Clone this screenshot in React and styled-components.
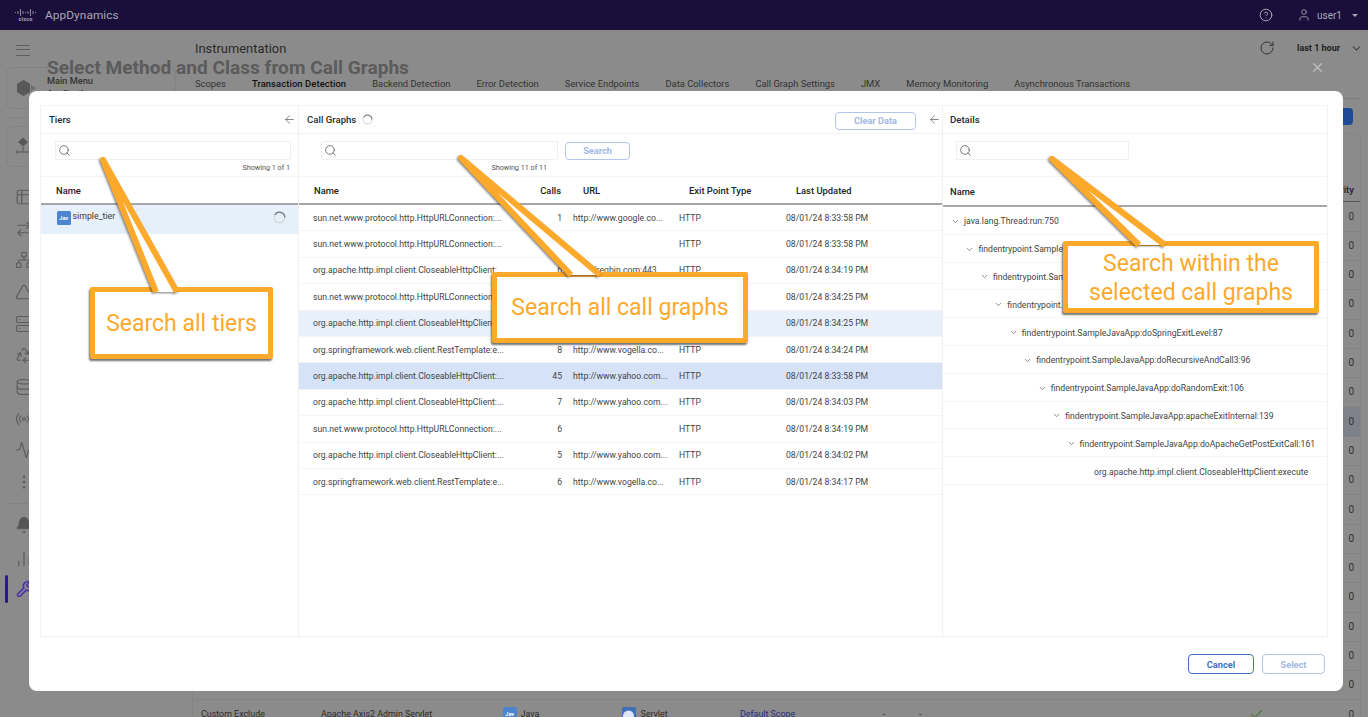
import React from "react";
import styled, { createGlobalStyle } from "styled-components";
import {
  ArrowLeft, Search as SearchIcon, ChevronDown, X, RotateCw, CircleHelp, User,
  Table2, ArrowRightLeft, Network, Triangle, Server, Recycle, Database, Radio, Activity,
  EllipsisVertical, Bell, ChartNoAxesColumn, Wrench, Check,
} from "lucide-react";

const Global = createGlobalStyle`
  html, body { margin: 0; padding: 0; height: 100%; overflow: hidden; background: #8a8a8a; }
  body { font-family: Roboto, "Liberation Sans", sans-serif; }
  * { box-sizing: border-box; }
`;

const Page = styled.div`
  position: relative; width: 1368px; height: 717px; overflow: hidden;
  display: flex; flex-direction: column; background: #8b8b8b;
`;
const TopBar = styled.header`
  height: 30px; flex: none; background: #1a0f3b; color: #a9a6b6;
  display: flex; align-items: center; padding: 0 10px 0 15px;
`;
const CiscoMark = styled.div`
  width: 21px; display: flex; flex-direction: column; align-items: center; margin-right: 9px; color: #a9a6b6;
`;
const CiscoWord = styled.span`font-size: 5.5px; font-weight: 700; line-height: 6px; letter-spacing: .2px;`;
const Brand = styled.span`font-size: 11.8px; letter-spacing: .1px;`;
const Spacer = styled.div`flex: 1;`;
const UserName = styled.span`font-size: 10px; margin: 0 10px 0 6px;`;
const HelpBox = styled.div`display: flex; margin-right: 24px; color: #c5c3cd;`;
const Caret = styled.span`
  width: 0; height: 0; border-left: 3px solid transparent; border-right: 3px solid transparent;
  border-top: 3px solid #a9a6b6;
`;

const Body = styled.div`flex: 1; display: flex; min-height: 0;`;
const Sidebar = styled.aside`
  width: 187px; flex: none; padding: 15px 0 0 6px; display: flex; flex-direction: column; color: #555;
`;
const Burger = styled.div`
  width: 14px; height: 11px; margin: 0 0 11px 10px;
  border-top: 1.5px solid #5f5f5f; border-bottom: 1.5px solid #5f5f5f; position: relative;
  &::after { content: ""; position: absolute; left: 0; right: 0; top: 3.2px; border-top: 1.5px solid #5f5f5f; }
`;
const NavCard = styled.div`
  width: 170px; height: ${p => p.$h}px; flex: none; border: 1px solid #828282; border-radius: 6px;
  display: flex; align-items: center; gap: 10px; padding-left: 9px; margin-bottom: ${p => p.$gap}px;
`;
const NavLabel = styled.div`display: flex; flex-direction: column; font-size: 9.2px; font-weight: 500; color: #333; line-height: 13px; padding-bottom: 2px;`;
const NavStrong = styled.span`font-weight: 700; color: #222;`;
const Divider = styled.div`width: 170px; flex: none; border-top: 1px solid #828282; margin-bottom: 8px; margin-top: ${p => p.$mt || 0}px;`;
const IconList = styled.div`display: grid; grid-auto-rows: 31.7px; justify-items: start; padding-left: 9px; margin-top: 14px;`;
const IconCell = styled.div`height: 100%; display: flex; align-items: center; color: #5c5c5c;`;
const LowerList = styled.div`display: flex; flex-direction: column; padding-left: 9px; margin-top: 4px;`;
const LowerCell = styled.div`height: 18px; display: flex; align-items: center; color: #5c5c5c; margin-bottom: ${p => p.$gap}px;`;
const ActiveItem = styled.div`display: flex; align-items: center; gap: 8px; margin-left: -1px; height: 28px; color: #4b31a8;`;
const ActiveBar = styled.div`width: 2.5px; height: 28px; border-radius: 2px; background: #2a1a86;`;

const Main = styled.main`flex: 1; padding: 8px 7px 0 8px; min-width: 0; display: flex; flex-direction: column;`;
const Heading = styled.div`height: 20px; display: flex; align-items: center; color: #2a2a2a;`;
const HeadingTitle = styled.h1`margin: 0; font-size: 12.9px; font-weight: 400;`;
const RangeLabel = styled.span`font-size: 9px; font-weight: 700; color: #222; margin-right: 10px;`;
const HeadRefresh = styled.div`display: flex; color: #333; margin-right: 22px;`;
const HeadChevron = styled.div`display: flex; color: #444; margin-right: -2px;`;
const Tabs = styled.nav`
  margin-top: 18px; height: 23px; padding-bottom: 8px; display: flex; gap: 26px; align-items: center;
  border-bottom: 1px solid #7d7d7d; font-size: 9.4px; color: #333;
`;
const Tab = styled.span`
  color: ${p => (p.$active ? "#111" : "#333")}; font-weight: ${p => (p.$active ? 500 : 400)};
  letter-spacing: ${p => (p.$active ? ".1px" : "0")}; white-space: nowrap;
`;
const Actions = styled.div`display: flex; justify-content: flex-end; padding-right: 8px; margin: 9px 0 8px;`;
const BlueButton = styled.button`width: 90px; height: 17px; border: 0; border-radius: 4px; background: #1c4a96;`;
const DataCard = styled.section`border-radius: 6px 6px 0 0; border: 1px solid #858585; border-bottom: 0; margin-left: -3px; flex: 1; overflow: hidden;`;
const DataHead = styled.div`
  height: 68.4px; border-bottom: 1.5px solid #555; display: flex; justify-content: flex-end; align-items: flex-end;
  font-size: 9.6px; font-weight: 500; color: #222; padding: 0 6px 6px 0;
`;
const DataRow = styled.div`
  height: 29.3px; display: grid; align-items: center; font-size: 8.9px; color: #2c2c2c; padding: 0 0 1px 8px; white-space: nowrap;
  grid-template-columns: 120px 182px 119px 118px 143px 36px 330px 30px 1fr;
  border-bottom: 1px solid #848484; background: ${p => (p.$active ? "#7e808a" : "transparent")};
`;
const CountCell = styled.span`grid-column: 9; text-align: right; padding-right: 6px; color: #333; font-size: 10px;`;
const TechCell = styled.span`display: flex; align-items: center; gap: ${p => p.$gap || 4}px;`;
const LinkText = styled.span`color: #2a2e7a;`;
const CheckCell = styled.span`display: flex; color: #4e7a3c;`;
const JavaChip = styled.span`
  display: inline-flex; align-items: center; justify-content: center; width: 13.5px; height: 13.5px; border-radius: 1.5px;
  background: ${p => p.$bg || "#4b84cf"}; color: #fff; font-size: 5.5px; font-weight: 700; flex: none;
`;

const ModalLayer = styled.div`
  position: absolute; top: 30px; left: 0; right: 0; bottom: 0; padding: 0 25px 26px 29px; display: flex; flex-direction: column;
`;
const TitleRow = styled.div`height: 61px; flex: none; display: flex; justify-content: space-between; padding: 27px 18px 0 18px;`;
const Title = styled.h2`margin: 0; font-size: 19.1px; line-height: 22px; font-weight: 700; color: #5b5b5b;`;
const CloseBox = styled.div`display: flex; color: #bcbcbc; height: 20px; align-items: center;`;
const Modal = styled.div`flex: 1; background: #fff; border-radius: 8px; padding: 14px 15px 0 11px; display: flex; flex-direction: column; min-height: 0;`;
const Panels = styled.div`
  height: 532px; flex: none; display: grid; grid-template-columns: 257px 644px 385px;
  border: 1px solid #f2f2f2;
`;
const Panel = styled.section`border-left: ${p => (p.$first ? "0" : "1px solid #f0f0f0")}; display: flex; flex-direction: column; min-width: 0;`;
const PanelHead = styled.div`
  height: 28px; flex: none; display: flex; align-items: center; gap: 6px; padding: 0 1px 0 ${p => p.$left}px;
  border-bottom: 1px solid #f2f2f2; font-size: 9.6px; font-weight: 500; color: #2a2a2a;
`;
const BackArrow = styled.div`display: flex; color: #555; margin-left: ${p => p.$ml || 0}px; margin-right: ${p => p.$mr || 0}px;`;
const SearchArea = styled.div`
  height: 43px; flex: none; padding: 7px 0 0 ${p => p.$left}px; border-bottom: 1px solid #f4f4f4; display: flex; flex-direction: column;
`;
const SearchTop = styled.div`display: flex; align-items: center; gap: 7px;`;
const SearchBox = styled.div`
  width: ${p => p.$w}px; height: 19px; border: 1px solid #efefef; border-radius: 1px; display: flex; align-items: center; padding-left: 1.5px; color: #555;
`;
const CountText = styled.div`
  font-size: 7.2px; color: #555; margin-top: 3px; width: ${p => p.$w}px; text-align: right; line-height: 10px;
`;
const GhostButton = styled.button`
  width: ${p => p.$w}px; height: ${p => p.$h}px; border-radius: 4px; background: #fff; margin-top: ${p => p.$mt || 0}px;
  border: 1.5px solid ${p => (p.$strong ? "#4470bd" : "#b2c5ea")}; color: ${p => (p.$strong ? "#4470bd" : "#a3b8e3")};
  font: 700 9.2px Roboto, sans-serif; padding: 0;
`;
const ColHead = styled.div`
  height: ${p => p.$h}px; flex: none; border-bottom: 2px solid #a6a6a6; display: flex; align-items: center;
  font-size: 9.4px; font-weight: 500; color: #222; padding-left: ${p => p.$left}px;
`;
const CallHead = styled.div`
  height: 28px; flex: none; border-bottom: 2px solid #a6a6a6; display: grid; align-items: center;
  grid-template-columns: 216px 58px 106px 107px 1fr; font-size: 9.4px; font-weight: 500; color: #222;
`;
const HeadCell = styled.span`padding-left: ${p => p.$pad || 0}px; text-align: ${p => p.$right ? "right" : "left"}; padding-right: ${p => p.$right ? 12 : 0}px;`;
const TierRow = styled.div`
  height: 28.5px; flex: none; background: #e6f0fb; display: flex; align-items: flex-start; padding: 6px 12px 0 16px;
  font-size: 8.8px; color: #3a3a3a; gap: 2px;
`;
const TierSpinner = styled.div`margin-left: auto; display: flex;`;
const CallRow = styled.div`
  height: 26.4px; flex: none; display: grid; align-items: center; grid-template-columns: 216px 58px 106px 107px 1fr;
  font-size: 8.66px; color: #444; border-bottom: 1px solid #f4f4f4; white-space: nowrap;
  background: ${p => (p.$tone === 2 ? "#d5e2f8" : p.$tone === 1 ? "#e8f0fc" : "#fff")};
`;
const NameCell = styled.span`padding-left: 14px;`;
const CallsCell = styled.span`text-align: right; padding-right: 11px;`;
const TreeRow = styled.div`
  height: 27.8px; flex: none; display: flex; align-items: center; gap: 4px; font-size: 8.66px; color: #444;
  border-bottom: 1px solid #f4f4f4; white-space: nowrap; overflow: hidden; padding-top: 2px;
  padding-left: ${p => 8 + p.$depth * 14.45}px;
`;
const TreeChevron = styled.div`display: flex; width: 9px; color: #666; flex: none;`;
const Footer = styled.div`flex: 1; display: flex; justify-content: flex-end; gap: 8px; padding: 17px 3px 0 0;`;

const Callout = styled.div`
  position: absolute; left: ${p => p.$x}px; top: ${p => p.$y}px; width: ${p => p.$w}px; height: ${p => p.$h}px;
  background: #fff; border: 5px solid #fca92c; border-radius: 2px; box-shadow: -1px 2px 2px rgba(40,40,40,.65);
  color: #fca92c; font-size: 23px; line-height: 29px; display: flex; align-items: center; justify-content: center; text-align: center;
  padding-top: ${p => p.$pt || 0}px;
`;
const Pointers = styled.svg`position: absolute; inset: 0; width: 1368px; height: 717px; pointer-events: none;`;

const Spinner = ({ size = 13 }) => (
  <svg width={size} height={size} viewBox="0 0 20 20" fill="none">
    <circle cx="10" cy="10" r="8" stroke="#d6d6d6" strokeWidth="2" />
    <path d="M3 6A8 8 0 0 1 18 10" stroke="#777" strokeWidth="2" />
  </svg>
);

const CiscoBars = () => (
  <svg width="21" height="7" viewBox="0 0 21 7" stroke="currentColor" strokeWidth="0.8">
    {[[0.5,3,4],[3,2,5],[5.5,0,7],[8,2,5],[10.5,3,4],[13,2,5],[15.5,0,7],[18,2,5],[20.5,3,4]].map(([x, a, b]) => (
      <line key={x} x1={x} x2={x} y1={a} y2={b} />
    ))}
  </svg>
);

const AppsGlyph = () => (
  <svg width="21" height="18" viewBox="0 0 21 18">
    <polygon points="7.5,1 14,4.7 14,13.3 7.5,17 1,13.3 1,4.7" fill="#585858" />
    <polygon points="15,6 20,9 15,12" fill="#6c6c6c" />
  </svg>
);
const FlowGlyph = () => (
  <svg width="22" height="20" viewBox="0 0 22 20" fill="none" stroke="#666" strokeWidth="1.4">
    <polygon points="7,0.5 12,5 7,9.5 2,5" fill="#585858" stroke="none" />
    <path d="M7 10V15M1 15H18M1 13V17M18 13V17" />
    <circle cx="15" cy="5" r="2" fill="#6c6c6c" stroke="none" />
  </svg>
);
const ServletGlyph = () => (
  <svg width="11" height="10" viewBox="0 0 11 10"><path d="M0 10V7A5.5 5.5 0 0 1 11 7V10Z" fill="#dfe8f6" /></svg>
);

const iconProps = { size: 18, strokeWidth: 1.6 };
const navIcons = [Table2, ArrowRightLeft, Network, Triangle, Server, Recycle, Database, Radio, Activity, EllipsisVertical];

const tabs = ["Scopes", "Transaction Detection", "Backend Detection", "Error Detection", "Service Endpoints", "Data Collectors", "Call Graph Settings", "JMX", "Memory Monitoring", "Asynchronous Transactions"];

const SUN = "sun.net.www.protocol.http.HttpURLConnection:...";
const APACHE = "org.apache.http.impl.client.CloseableHttpClient:...";
const SPRING = "org.springframework.web.client.RestTemplate:e...";
const GOOGLE = "http://www.google.co...";
const YAHOO = "http://www.yahoo.com...";
const VOGELLA = "http://www.vogella.co...";
const calls = [
  [SUN, "1", GOOGLE, "08/01/24 8:33:58 PM", 0],
  [SUN, "", "", "08/01/24 8:33:58 PM", 0],
  [APACHE, "6", "http://reqbin.com:443", "08/01/24 8:34:19 PM", 0],
  [SUN, "", "", "08/01/24 8:34:25 PM", 0],
  [APACHE, "", "", "08/01/24 8:34:25 PM", 1],
  [SPRING, "8", VOGELLA, "08/01/24 8:34:24 PM", 0],
  [APACHE, "45", YAHOO, "08/01/24 8:33:58 PM", 2],
  [APACHE, "7", YAHOO, "08/01/24 8:34:03 PM", 0],
  [SUN, "6", "", "08/01/24 8:34:19 PM", 0],
  [APACHE, "5", YAHOO, "08/01/24 8:34:02 PM", 0],
  [SPRING, "6", VOGELLA, "08/01/24 8:34:17 PM", 0],
];
const tree = [
  "java.lang.Thread:run:750",
  "findentrypoint.SampleJavaApp",
  "findentrypoint.SampleJavaApp",
  "findentrypoint.SampleJavaApp",
  "findentrypoint.SampleJavaApp:doSpringExitLevel:87",
  "findentrypoint.SampleJavaApp:doRecursiveAndCall3:96",
  "findentrypoint.SampleJavaApp:doRandomExit:106",
  "findentrypoint.SampleJavaApp:apacheExitInternal:139",
  "findentrypoint.SampleJavaApp:doApacheGetPostExitCall:161",
  "org.apache.http.impl.client.CloseableHttpClient:execute",
];

const pointers = [
  "156,292 103,160 177,292",
  "571,275 461,158 600,275",
  "1139,245 1052,159 1165,245",
];

function Background() {
  return (
    <Body>
      <Sidebar>
        <Burger />
        <NavCard $h={42} $gap={8}>
          <AppsGlyph />
          <NavLabel>Main Menu<NavStrong>Applications</NavStrong></NavLabel>
        </NavCard>
        <Divider />
        <NavCard $h={41} $gap={0}>
          <FlowGlyph />
        </NavCard>
        <IconList>
          {navIcons.map((I, i) => <IconCell key={i}><I {...iconProps} /></IconCell>)}
        </IconList>
        <Divider $mt={5} />
        <LowerList>
          <LowerCell $gap={16}><Bell {...iconProps} fill="#555" /></LowerCell>
          <LowerCell $gap={7}><ChartNoAxesColumn {...iconProps} /></LowerCell>
        </LowerList>
        <ActiveItem>
          <ActiveBar />
          <Wrench size={18} strokeWidth={2.2} />
        </ActiveItem>
      </Sidebar>
      <Main>
        <Heading>
          <HeadingTitle>Instrumentation</HeadingTitle>
          <Spacer />
          <HeadRefresh><RotateCw size={16} strokeWidth={1.5} /></HeadRefresh>
          <RangeLabel>last 1 hour</RangeLabel>
          <HeadChevron><ChevronDown size={13} /></HeadChevron>
        </Heading>
        <Tabs>
          {tabs.map((t, i) => <Tab key={t} $active={i === 1}>{t}</Tab>)}
        </Tabs>
        <Actions><BlueButton /></Actions>
        <DataCard>
          <DataHead>Severity</DataHead>
          {Array.from({ length: 17 }, (_, i) => (
            <DataRow key={i} $active={i === 7}><CountCell>0</CountCell></DataRow>
          ))}
          <DataRow>
            <span>Custom Exclude</span>
            <span>Apache Axis2 Admin Servlet</span>
            <TechCell><JavaChip>Jav</JavaChip>Java</TechCell>
            <TechCell $gap={5}><JavaChip $bg="#3f6fb8"><ServletGlyph /></JavaChip>Servlet</TechCell>
            <LinkText>Default Scope</LinkText>
            <span>-</span>
            <span>-</span>
            <CheckCell><Check size={15} /></CheckCell>
            <CountCell>0</CountCell>
          </DataRow>
        </DataCard>
      </Main>
    </Body>
  );
}

export default function App() {
  return (
    <Page>
      <Global />
      <TopBar>
        <CiscoMark><CiscoBars /><CiscoWord>cisco</CiscoWord></CiscoMark>
        <Brand>AppDynamics</Brand>
        <Spacer />
        <HelpBox><CircleHelp size={14} strokeWidth={1.4} /></HelpBox>
        <User size={14} strokeWidth={1.4} />
        <UserName>user1</UserName>
        <Caret />
      </TopBar>
      <Background />
      <ModalLayer>
        <TitleRow>
          <Title>Select Method and Class from Call Graphs</Title>
          <CloseBox><X size={15} strokeWidth={2.2} /></CloseBox>
        </TitleRow>
        <Modal>
          <Panels>
            <Panel $first>
              <PanelHead $left={8}>Tiers<Spacer /><BackArrow $mr={1}><ArrowLeft size={13} strokeWidth={1.3} /></BackArrow></PanelHead>
              <SearchArea $left={14}>
                <SearchTop><SearchBox $w={236}><SearchIcon size={13} strokeWidth={1.4} /></SearchBox></SearchTop>
                <CountText $w={235}>Showing 1 of 1</CountText>
              </SearchArea>
              <ColHead $h={28} $left={15}>Name</ColHead>
              <TierRow>
                <JavaChip>Jav</JavaChip>simple_tier
                <TierSpinner><Spinner /></TierSpinner>
              </TierRow>
            </Panel>
            <Panel>
              <PanelHead $left={8}>
                Call Graphs<Spinner size={11} /><Spacer />
                <GhostButton $w={81} $h={18} $mt={2}>Clear Data</GhostButton>
                <BackArrow $ml={6} $mr={0}><ArrowLeft size={13} strokeWidth={1.3} /></BackArrow>
              </PanelHead>
              <SearchArea $left={22}>
                <SearchTop>
                  <SearchBox $w={237}><SearchIcon size={13} strokeWidth={1.4} /></SearchBox>
                  <GhostButton $w={65} $h={18}>Search</GhostButton>
                </SearchTop>
                <CountText $w={226}>Showing 11 of 11</CountText>
              </SearchArea>
              <CallHead>
                <HeadCell $pad={15}>Name</HeadCell>
                <HeadCell $right>Calls</HeadCell>
                <HeadCell $pad={10}>URL</HeadCell>
                <HeadCell $pad={10}>Exit Point Type</HeadCell>
                <HeadCell $pad={10}>Last Updated</HeadCell>
              </CallHead>
              {calls.map(([name, n, url, time, tone], i) => (
                <CallRow key={i} $tone={tone}>
                  <NameCell>{name}</NameCell>
                  <CallsCell>{n}</CallsCell>
                  <span>{url}</span>
                  <span>HTTP</span>
                  <span>{time}</span>
                </CallRow>
              ))}
            </Panel>
            <Panel>
              <PanelHead $left={7}>Details</PanelHead>
              <SearchArea $left={13}>
                <SearchTop><SearchBox $w={173}><SearchIcon size={13} strokeWidth={1.4} /></SearchBox></SearchTop>
              </SearchArea>
              <ColHead $h={30} $left={7}>Name</ColHead>
              {tree.map((t, i) => (
                <TreeRow key={i} $depth={i}>
                  {i < 9 ? <TreeChevron><ChevronDown size={9} /></TreeChevron> : <TreeChevron />}
                  {t}
                </TreeRow>
              ))}
            </Panel>
          </Panels>
          <Footer>
            <GhostButton $w={66} $h={20} $strong>Cancel</GhostButton>
            <GhostButton $w={63} $h={20}>Select</GhostButton>
          </Footer>
        </Modal>
      </ModalLayer>
      <Callout $x={90} $y={287} $w={183} $h={72}>Search all tiers</Callout>
      <Callout $x={492} $y={272} $w={256} $h={71}>Search all call graphs</Callout>
      <Callout $x={1063} $y={241} $w={256} $h={72} $pt={2}>Search within the<br />selected call graphs</Callout>
      <Pointers viewBox="0 0 1368 717">
        {pointers.map(p => (
          <polyline key={p} points={p} fill="#fff" stroke="#fca92c" strokeWidth="6" strokeLinejoin="round"
            style={{ filter: "drop-shadow(-1px 1px 1px rgba(40,40,40,.6))" }} />
        ))}
      </Pointers>
    </Page>
  );
}
